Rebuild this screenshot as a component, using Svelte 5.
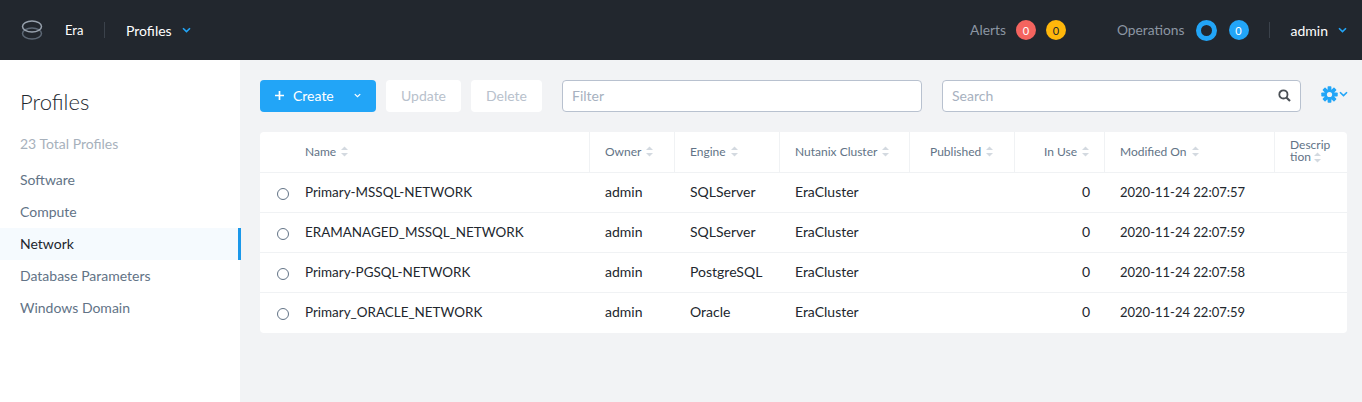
<script lang="ts">
  const nav = ["Software", "Compute", "Network", "Database Parameters", "Windows Domain"];

  const columns = [
    { label: "Name", width: 330 },
    { label: "Owner", width: 85 },
    { label: "Engine", width: 105 },
    { label: "Nutanix Cluster", width: 130 },
    { label: "Published", width: 105, wide: true },
    { label: "In Use", width: 90, right: true },
    { label: "Modified On", width: 170 },
    { label: "Descrip tion", width: 72 },
  ];

  const rows = [
    { name: "Primary-MSSQL-NETWORK", engine: "SQLServer", modified: "2020-11-24 22:07:57" },
    { name: "ERAMANAGED_MSSQL_NETWORK", engine: "SQLServer", modified: "2020-11-24 22:07:59" },
    { name: "Primary-PGSQL-NETWORK", engine: "PostgreSQL", modified: "2020-11-24 22:07:58" },
    { name: "Primary_ORACLE_NETWORK", engine: "Oracle", modified: "2020-11-24 22:07:59" },
  ];
</script>

{#snippet chevron(cls = "")}
  <svg class="chevron {cls}" width="9" height="6" viewBox="0 0 9 6" fill="none">
    <path d="M1 1.2 L4.5 4.6 L8 1.2" stroke="currentColor" stroke-width="1.6" />
  </svg>
{/snippet}

{#snippet sort()}
  <svg class="sort" width="7" height="11" viewBox="0 0 7 11">
    <path d="M3.5 0.5 L7 4 H0 Z" fill="#d3d9e0" />
    <path d="M3.5 10.5 L7 7 H0 Z" fill="#d3d9e0" />
  </svg>
{/snippet}

<div class="page">
  <header class="topbar">
    <div class="brand">
      <svg width="22" height="20" viewBox="0 0 22 20" fill="none">
        <ellipse cx="11" cy="13.5" rx="9.5" ry="5.5" stroke="#5d6875" stroke-width="1.5" />
        <ellipse cx="11" cy="6.5" rx="9.5" ry="5.5" stroke="#98a2ae" stroke-width="1.5" />
      </svg>
      <span class="brand-name">Era</span>
    </div>
    <div class="page-menu">
      <span>Profiles</span>
      {@render chevron("blue")}
    </div>
    <div class="status">
      <div class="status-group alerts">
        <span class="status-label">Alerts</span>
        <span class="badge red">0</span>
        <span class="badge yellow">0</span>
      </div>
      <div class="status-group ops">
        <span class="status-label">Operations</span>
        <span class="ring"></span>
        <span class="badge blue">0</span>
      </div>
      <div class="user">
        <span>admin</span>
        {@render chevron("blue")}
      </div>
    </div>
  </header>

  <div class="body">
    <aside class="sidebar">
      <h1>Profiles</h1>
      <div class="total">23 Total Profiles</div>
      <nav>
        {#each nav as item}
          <div class="nav-item" class:active={item === "Network"}>{item}</div>
        {/each}
      </nav>
    </aside>

    <main class="content">
      <div class="toolbar">
        <button class="btn-create" type="button">
          <svg width="9" height="9" viewBox="0 0 9 9"><path d="M4.5 0v9M0 4.5h9" stroke="#fff" stroke-width="1.7" /></svg>
          <span class="create-label">Create</span>
          {@render chevron("small")}
        </button>
        <button class="btn-muted update" type="button">Update</button>
        <button class="btn-muted delete" type="button">Delete</button>
        <div class="input filter">Filter</div>
        <div class="input search">
          <span>Search</span>
          <svg width="13" height="13" viewBox="0 0 13 13" fill="none">
            <circle cx="5.4" cy="5.4" r="4.1" stroke="#4a4f55" stroke-width="1.8" />
            <path d="M8.4 8.4 L12 12" stroke="#4a4f55" stroke-width="2.1" />
          </svg>
        </div>
        <div class="settings">
          <svg width="17" height="17" viewBox="0 0 17 17">
            <g fill="#22a5f7">
              {#each [0, 45, 90, 135] as angle}
                <rect x="6.6" y="0.3" width="3.8" height="16.4" rx="0.7" transform="rotate({angle} 8.5 8.5)" />
              {/each}
            </g>
            <circle cx="8.5" cy="8.5" r="5.2" fill="#22a5f7" />
            <circle cx="8.5" cy="8.5" r="2.6" fill="#f2f3f5" />
          </svg>
          {@render chevron("blue")}
        </div>
      </div>

      <div class="table">
        <div class="row head">
          {#each columns as col, i}
            <div class="cell" class:first={i === 0} class:right={col.right} class:wide={col.wide} style="width: {col.width}px">
              {#if col.label === "Descrip tion"}
                <span class="wrap">Descrip<br />tion {@render sort()}</span>
              {:else}
                <span>{col.label}</span>
                {@render sort()}
              {/if}
            </div>
          {/each}
        </div>
        {#each rows as row}
          <div class="row">
            <div class="cell first name" style="width: {columns[0].width}px">
              <span class="radio"></span>
              {row.name}
            </div>
            <div class="cell" style="width: {columns[1].width}px">admin</div>
            <div class="cell" style="width: {columns[2].width}px">{row.engine}</div>
            <div class="cell" style="width: {columns[3].width}px">EraCluster</div>
            <div class="cell" style="width: {columns[4].width}px"></div>
            <div class="cell right" style="width: {columns[5].width}px">0</div>
            <div class="cell date" style="width: {columns[6].width}px">{row.modified}</div>
            <div class="cell" style="width: {columns[7].width}px"></div>
          </div>
        {/each}
      </div>
    </main>
  </div>
</div>

<style>
  :global(body) {
    margin: 0;
    font-family: "Lato", "Open Sans", sans-serif;
    background: #f2f3f5;
  }

  .page {
    height: 402px;
    display: flex;
    flex-direction: column;
    overflow: hidden;
  }

  .topbar {
    height: 60px;
    flex: none;
    background: #22272e;
    display: flex;
    align-items: center;
    color: #fff;
    font-size: 14px;
  }

  .brand {
    display: flex;
    align-items: center;
    width: 105px;
    height: 16px;
    padding-left: 21px;
    box-sizing: border-box;
    gap: 22px;
    border-right: 1px solid #3b424b;
  }

  .brand-name {
    font-size: 13px;
  }

  .page-menu {
    margin-left: 21px;
    display: flex;
    align-items: center;
    gap: 10px;
  }

  .chevron.blue {
    color: #22a5f7;
  }

  .status {
    margin-left: auto;
    display: flex;
    align-items: center;
  }

  .status-group {
    display: flex;
    align-items: center;
  }

  .status-label {
    color: #8c96a3;
    font-size: 13.8px;
    padding-bottom: 2px;
  }

  .alerts {
    margin-right: 51px;
  }

  .alerts .status-label {
    margin-right: 10px;
  }

  .ops .status-label {
    margin-right: 11px;
  }

  .alerts .badge.red {
    margin-right: 10px;
  }

  .badge {
    width: 20px;
    height: 20px;
    border-radius: 50%;
    display: flex;
    align-items: center;
    justify-content: center;
    font-size: 11px;
    color: #fff;
  }

  .badge.red {
    background: #f4645f;
  }

  .badge.yellow {
    background: #ffb70b;
    color: #22272e;
  }

  .badge.blue {
    background: #22a5f7;
  }

  .ring {
    width: 21px;
    height: 21px;
    box-sizing: border-box;
    border: 5px solid #22a5f7;
    border-radius: 50%;
    margin-right: 12px;
  }

  .user {
    margin-left: 20px;
    padding-left: 21px;
    padding-right: 15px;
    height: 16px;
    display: flex;
    align-items: center;
    gap: 10px;
    border-left: 1px solid #3b424b;
  }

  .body {
    flex: 1;
    display: flex;
  }

  .sidebar {
    width: 240px;
    flex: none;
    background: #fff;
    box-sizing: border-box;
    padding-top: 28px;
  }

  h1 {
    margin: 0 0 0 20px;
    font-size: 22px;
    line-height: 28px;
    font-weight: 300;
    color: #22272e;
  }

  .total {
    margin: 20px 0 12px 20px;
    font-size: 14px;
    line-height: 16px;
    color: #a7b1bc;
  }

  .nav-item {
    height: 32px;
    line-height: 32px;
    padding-left: 20px;
    font-size: 14px;
    color: #627386;
  }

  .nav-item.active {
    width: 241px;
    box-sizing: border-box;
    color: #22272e;
    background: #f5fafe;
    border-right: 3px solid #1b98ea;
  }

  .content {
    flex: 1;
    padding: 20px 15px 0 20px;
    min-width: 0;
  }

  .toolbar {
    display: flex;
    align-items: center;
    height: 32px;
  }

  .toolbar > * {
    flex: none;
  }

  button {
    font: inherit;
    font-size: 14px;
    border: none;
    height: 32px;
    border-radius: 4px;
    padding: 0 0 2px;
  }

  .btn-create {
    width: 116px;
    background: #22a5f7;
    color: #fff;
    display: flex;
    align-items: center;
    padding-left: 15px;
    box-sizing: border-box;
  }

  .create-label {
    margin-left: 9px;
    margin-right: 20px;
  }

  .chevron.small {
    width: 7px;
    height: 5px;
  }

  .btn-muted {
    background: #fff;
    color: #b8c1cc;
  }

  .update {
    width: 75px;
    margin-left: 10px;
  }

  .delete {
    width: 71px;
    margin-left: 10px;
  }

  .input {
    height: 32px;
    box-sizing: border-box;
    background: #fff;
    border: 1px solid #b8c1cf;
    border-radius: 4px;
    font-size: 14px;
    color: #a7b1c0;
    display: flex;
    align-items: center;
    justify-content: space-between;
    padding: 0 9px 2px;
  }

  .filter {
    width: 360px;
    margin-left: 20px;
  }

  .search {
    width: 359px;
    margin-left: 20px;
  }

  .settings {
    margin-left: 20px;
    margin-bottom: 4px;
    display: flex;
    align-items: center;
    gap: 1px;
  }

  .table {
    margin-top: 20px;
    width: 1087px;
    background: #fff;
    border-radius: 4px;
    font-size: 14px;
    color: #22272e;
    padding-bottom: 1px;
  }

  .row {
    display: flex;
    height: 40px;
    border-top: 1px solid #f0f2f4;
    box-sizing: border-box;
  }

  .row:first-child {
    border-top: none;
  }

  .cell {
    box-sizing: border-box;
    flex: none;
    display: flex;
    align-items: center;
    padding: 0 15px 2px;
    white-space: nowrap;
    position: relative;
  }

  .cell.first {
    padding-left: 45px;
  }

  .cell.right {
    justify-content: flex-end;
  }

  .cell.name {
    font-size: 13.45px;
  }

  .cell.date {
    font-size: 13px;
  }

  .head {
    font-size: 12px;
    color: #627386;
  }

  .head .cell {
    border-right: 1px solid #f0f2f4;
    gap: 5px;
  }

  .head .cell.wide {
    padding-left: 20px;
  }

  .head .cell:last-child {
    border-right: none;
  }

  .wrap {
    line-height: 12px;
    white-space: normal;
  }

  .sort {
    vertical-align: -2px;
  }

  .radio {
    position: absolute;
    left: 17px;
    top: 15px;
    width: 12px;
    height: 12px;
    box-sizing: border-box;
    border: 1px solid #627386;
    border-radius: 50%;
  }
</style>
